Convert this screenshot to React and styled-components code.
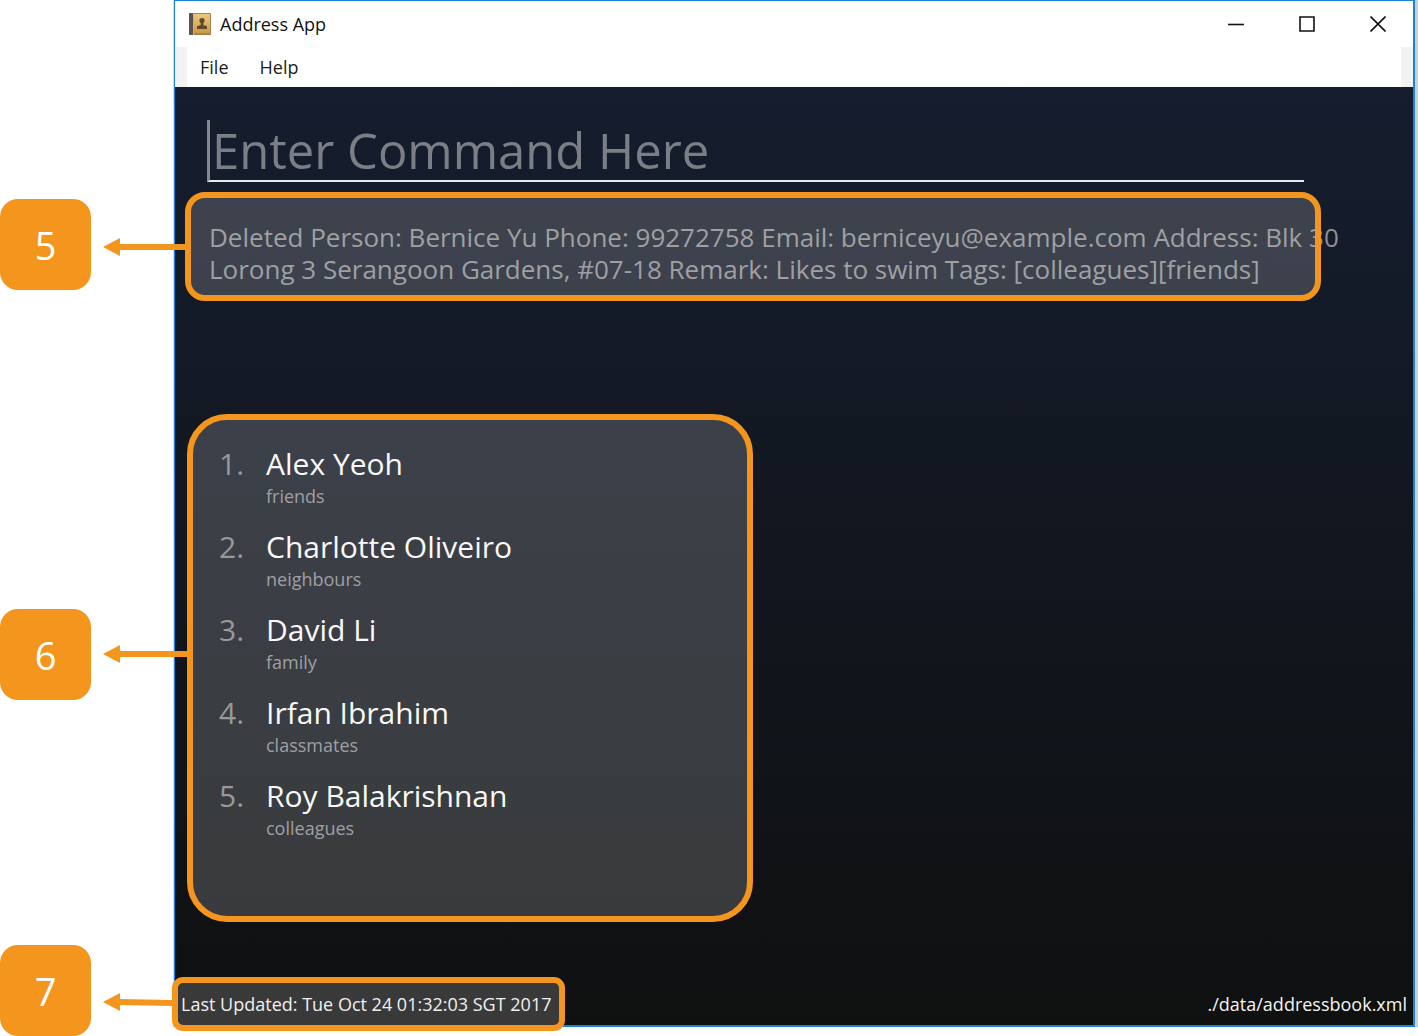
import React from 'react';
import styled, { createGlobalStyle } from 'styled-components';

const ORANGE = '#f4951d';

const GlobalStyle = createGlobalStyle`
  * { box-sizing: border-box; }
  body {
    margin: 0;
    background: #fff;
    font-family: "Open Sans", "Noto Sans", sans-serif;
  }
`;

const Page = styled.main`
  min-height: 100vh;
  display: flex;
  padding: 0 3px 9px 174px;
`;

const Window = styled.div`
  flex: 1;
  min-width: 0;
  display: flex;
  flex-direction: column;
  border: 2px solid #1883d7;
  border-width: 1px 2px 2px 1px;
  box-shadow: -1px 0 0 #d8dde0, 3px 0 0 #d0cfcf;
`;

const TitleBar = styled.header`
  display: flex;
  align-items: center;
  height: 46px;
  padding-left: 14px;
  background: #fff;
`;

const Title = styled.h1`
  flex: 1;
  margin: 0 0 0 9px;
  font-size: 18px;
  line-height: 24px;
  font-weight: 400;
  color: #111;
`;

const WindowButtons = styled.div`
  display: flex;
`;

const WindowButton = styled.button`
  display: grid;
  place-items: center;
  width: 71px;
  height: 46px;
  padding: 0;
  border: 0;
  background: none;
`;

const MenuBar = styled.nav`
  display: flex;
  align-items: center;
  gap: 31px;
  height: 40px;
  padding: 0 13px;
  border: 12px solid #f2f2f2;
  border-width: 0 12px;
  background: #fff;
`;

const MenuButton = styled.button`
  padding: 0;
  border: 0;
  background: none;
  font-family: inherit;
  font-size: 18px;
  line-height: 24px;
  color: #1c1c1c;
`;

const Body = styled.div`
  flex: 1;
  display: flex;
  flex-direction: column;
  background: linear-gradient(#151d2e, #0f1010);
`;

const CommandForm = styled.form`
  padding: 33px 109px 0 32px;
`;

const CommandInput = styled.input`
  display: block;
  width: 100%;
  height: 62px;
  padding: 0 0 0 2px;
  border: 0;
  border-left: 3px solid #85878e;
  border-bottom: 2px solid #e8eaee;
  border-radius: 0;
  outline: 0;
  background: none;
  font-family: inherit;
  font-size: 49px;
  color: #fff;
  &::placeholder { color: #7b7e84; opacity: 1; }
`;

const ResultSection = styled.section`
  position: relative;
  min-height: 232px;
  padding: 39px 60px 0 34px;
`;

const ResultText = styled.p`
  margin: 0;
  font-size: 26px;
  line-height: 32px;
  color: #8e9094;
`;

const ListSection = styled.section`
  position: relative;
  flex: 1;
  padding: 30px 0 60px 44px;
`;

const PersonList = styled.ol`
  display: grid;
  gap: 19px;
  margin: 0;
  padding: 0;
  list-style: none;
`;

const PersonItem = styled.li`
  display: grid;
  grid-template-columns: 47px 1fr;
`;

const PersonIndex = styled.span`
  font-size: 30px;
  line-height: 40px;
  color: #85878b;
`;

const PersonName = styled.h2`
  margin: 0;
  font-size: 30px;
  line-height: 40px;
  font-weight: 400;
  color: #fff;
`;

const PersonTag = styled.span`
  grid-column: 2;
  font-size: 18px;
  line-height: 24px;
  color: #8e9094;
`;

const StatusBar = styled.footer`
  position: relative;
  display: flex;
  align-items: center;
  justify-content: space-between;
  height: 42px;
  padding: 0 6px;
  font-size: 18px;
  line-height: 24px;
  color: #f4f4f4;
`;

const StatusText = styled.span`
  position: relative;
`;

/* Highlight frames and numbered markers drawn over the window */
const Frame = styled.div`
  position: absolute;
  inset: ${(p) => p.$inset};
  border: 6px solid ${ORANGE};
  border-radius: ${(p) => p.$radius}px;
  background: rgba(226, 226, 226, 0.2);
  pointer-events: none;
`;

const Pointer = styled.div`
  position: absolute;
  left: -175px;
  top: ${(p) => p.$top}px;
  display: flex;
  gap: 12px;
`;

const Badge = styled.span`
  display: grid;
  place-items: center;
  width: 91px;
  height: 91px;
  border-radius: 18px;
  background: ${ORANGE};
  color: #fff;
  font-size: 38px;
  line-height: 48px;
`;

function Marker({ number, top, tipY, tailY, length }) {
  return (
    <Pointer $top={top}>
      <Badge>{number}</Badge>
      <svg width={length} height="91" viewBox={`0 0 ${length} 91`} fill={ORANGE} aria-hidden="true">
        <path d={`M0 ${tipY}L17 ${tipY - 9}V${tipY + 9}Z`} />
        <path d={`M16 ${tipY}L${length} ${tailY}`} stroke={ORANGE} strokeWidth="6" />
      </svg>
    </Pointer>
  );
}

function BookIcon() {
  return (
    <svg width="22" height="22" viewBox="0 0 22 22" aria-hidden="true">
      <defs>
        <linearGradient id="cover" x1="0" y1="0" x2="0" y2="1">
          <stop offset="0" stopColor="#ecc87f" />
          <stop offset="1" stopColor="#cc9a48" />
        </linearGradient>
      </defs>
      <rect width="22" height="22" rx="1" fill="#a8834e" />
      <rect width="4" height="22" rx="1" fill="#5d524d" />
      <rect x="4" width="1" height="22" fill="#c8b08a" />
      <rect x="5" y="1" width="16" height="19" fill="url(#cover)" />
      <path
        d="M13 5c1.700 0 2.600 1.100 2.600 2.500 0 1.200-.7 1.900-1.300 2.500v2l3.700 1.200V16H8V13.200l3.700-1.200v-2c-.6-.6-1.300-1.300-1.300-2.500C10.400 6.100 11.300 5 13 5Z"
        fill="#5f4a2c"
      />
    </svg>
  );
}

const PEOPLE = [
  { name: 'Alex Yeoh', tag: 'friends' },
  { name: 'Charlotte Oliveiro', tag: 'neighbours' },
  { name: 'David Li', tag: 'family' },
  { name: 'Irfan Ibrahim', tag: 'classmates' },
  { name: 'Roy Balakrishnan', tag: 'colleagues' },
];

const WINDOW_ICONS = [
  { label: 'Minimize', d: 'M0 8.500H16' },
  { label: 'Maximize', d: 'M1 1H15V15H1Z' },
  { label: 'Close', d: 'M0.500 0.500L15.500 15.500M15.500 0.500L0.500 15.500' },
];

export default function App() {
  return (
    <Page>
      <GlobalStyle />
      <Window>
        <TitleBar>
          <BookIcon />
          <Title>Address App</Title>
          <WindowButtons>
            {WINDOW_ICONS.map((icon) => (
              <WindowButton key={icon.label} type="button" aria-label={icon.label}>
                <svg width="16" height="16" viewBox="0 0 16 16" fill="none" stroke="#111" strokeWidth="1.600">
                  <path d={icon.d} />
                </svg>
              </WindowButton>
            ))}
          </WindowButtons>
        </TitleBar>
        <MenuBar>
          <MenuButton type="button">File</MenuButton>
          <MenuButton type="button">Help</MenuButton>
        </MenuBar>
        <Body>
          <CommandForm onSubmit={(e) => e.preventDefault()}>
            <CommandInput type="text" aria-label="Command" placeholder="Enter Command Here" />
          </CommandForm>
          <ResultSection>
            <ResultText>
              Deleted Person: Bernice Yu Phone: 99272758 Email: berniceyu@example.com Address: Blk 30
              Lorong 3 Serangoon Gardens, #07-18 Remark: Likes to swim Tags: [colleagues][friends]
            </ResultText>
            <Frame $inset="10px 92px 113px 10px" $radius={20} />
            <Marker number={5} top={17} tipY={48} tailY={48} length={84} />
          </ResultSection>
          <ListSection>
            <PersonList>
              {PEOPLE.map((person, i) => (
                <PersonItem key={person.name}>
                  <PersonIndex>{i + 1}.</PersonIndex>
                  <PersonName>{person.name}</PersonName>
                  <PersonTag>{person.tag}</PersonTag>
                </PersonItem>
              ))}
            </PersonList>
            <Frame $inset="0 calc(50% + 41px) 61px 12px" $radius={40} />
            <Marker number={6} top={195} tipY={45} tailY={45} length={86} />
          </ListSection>
          <StatusBar>
            <StatusText>
              Last Updated: Tue Oct 24 01:32:03 SGT 2017
              <Frame $inset="-15px -14px -15px -9px" $radius={11} />
            </StatusText>
            <StatusText>./data/addressbook.xml</StatusText>
            <Marker number={7} top={-38} tipY={57} tailY={58} length={70} />
          </StatusBar>
        </Body>
      </Window>
    </Page>
  );
}
